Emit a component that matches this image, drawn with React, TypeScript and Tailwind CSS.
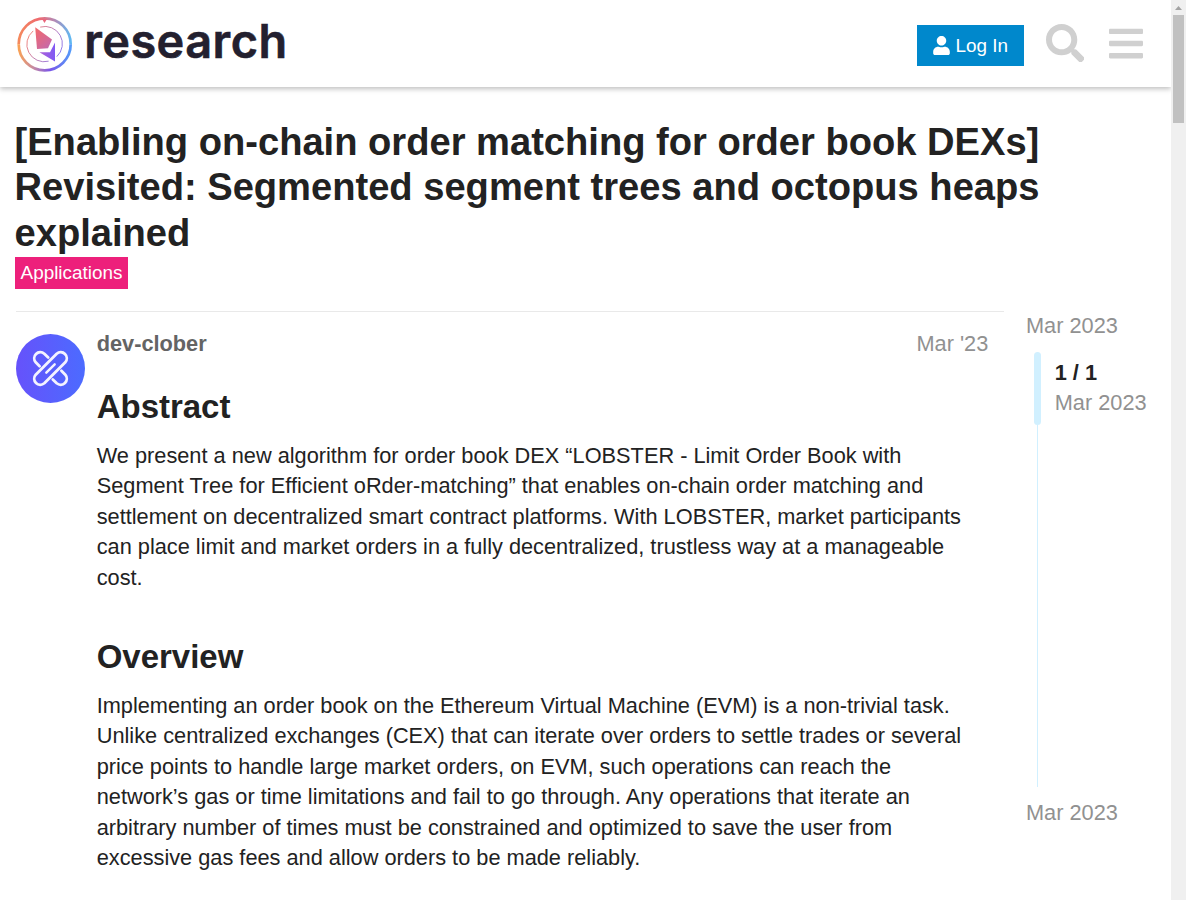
import React from "react";
import { FaUser, FaSearch, FaBars } from "react-icons/fa";

function RingLogo() {
  return (
    <svg viewBox="0 0 70 70" className="mt-px h-[70px] w-[70px] shrink-0" fill="none">
      <defs>
        <linearGradient id="top" x1="8" y1="30" x2="61" y2="30" gradientUnits="userSpaceOnUse">
          <stop offset="0" stopColor="#f58a5c" />
          <stop offset="0.4" stopColor="#ee6a70" />
          <stop offset="0.7" stopColor="#b08bb8" />
          <stop offset="1" stopColor="#5fb8f2" />
        </linearGradient>
        <linearGradient id="bottom" x1="8" y1="40" x2="61" y2="40" gradientUnits="userSpaceOnUse">
          <stop offset="0" stopColor="#fba253" />
          <stop offset="0.3" stopColor="#c48aa5" />
          <stop offset="0.6" stopColor="#7a55e8" />
          <stop offset="1" stopColor="#549bfa" />
        </linearGradient>
        <linearGradient id="inner" x1="17" y1="25" x2="52" y2="45" gradientUnits="userSpaceOnUse">
          <stop offset="0" stopColor="#f3786a" />
          <stop offset="1" stopColor="#7c6cf2" />
        </linearGradient>
        <linearGradient id="gem" x1="25" y1="20" x2="49" y2="46" gradientUnits="userSpaceOnUse">
          <stop offset="0" stopColor="#f1696d" />
          <stop offset="0.5" stopColor="#d0699c" />
          <stop offset="1" stopColor="#9b6cd5" />
        </linearGradient>
        <linearGradient id="shard" x1="30" y1="45" x2="48" y2="45" gradientUnits="userSpaceOnUse">
          <stop offset="0" stopColor="#ad61d8" />
          <stop offset="1" stopColor="#7758fa" />
        </linearGradient>
      </defs>
      <path d="M8.7 34.3a26 26 0 0 1 52 0" stroke="url(#top)" strokeWidth="2.7" />
      <path d="M8.7 34.3a26 26 0 0 0 52 0" stroke="url(#bottom)" strokeWidth="2.7" />
      <path d="M32 9h5l-2.5 4z" fill="#ea667c" />
      <path d="M30.2 17.1A17.4 17.4 0 0 1 46.8 46.6" stroke="url(#inner)" strokeWidth="0.9" />
      <path d="M23.2 20.9A17.4 17.4 0 0 0 38.6 51.2" stroke="url(#inner)" strokeWidth="0.9" />
      <path d="M25.2 17.2L42 29.5L38 38.3L27 39z" fill="url(#gem)" />
      <path d="M45 32.5V51.5L29.4 42.2L40 42.3z" fill="url(#shard)" />
    </svg>
  );
}

function CloverAvatar() {
  return (
    <svg viewBox="0 0 69 69" className="h-[69px] w-[69px] shrink-0" fill="none">
      <defs>
        <linearGradient id="disc" x1="0" y1="0" x2="69" y2="0" gradientUnits="userSpaceOnUse">
          <stop offset="0" stopColor="#6652fb" />
          <stop offset="1" stopColor="#4c6bff" />
        </linearGradient>
      </defs>
      <circle cx="34.5" cy="34.5" r="34.5" fill="url(#disc)" />
      <g stroke="#f4f3ff" strokeWidth="2.8" strokeLinecap="round" strokeLinejoin="round">
        <path d="M40.7 19.7L19.7 40.7A6.1 6.1 0 0 0 28.3 49.3L49.3 28.3A6.1 6.1 0 0 0 40.7 19.7Z" />
        <path d="M32.2 23.6L28.3 19.7A6.1 6.1 0 0 0 19.7 28.3L23.6 32.2" />
        <path d="M36.8 45.4L40.7 49.3A6.1 6.1 0 0 0 49.3 40.7L45.4 36.8" />
        <path d="M30.3 38.7L38.7 30.3" strokeWidth="2.4" />
      </g>
    </svg>
  );
}

function Header() {
  return (
    <header className="flex h-[87px] shrink-0 items-start bg-white shadow-[0_2px_5px_0_rgba(0,0,0,0.25)]">
      <div className="flex pl-2.5 pt-[9px]">
        <RingLogo />
        <span className="pl-[4.2px] font-[Inter] text-[46.8px] font-semibold leading-[65px] tracking-[0.5px] text-[#23202f] [-webkit-text-stroke:0.6px_#23202f]">
          research
        </span>
      </div>
      <div className="ml-auto flex items-start pr-7">
        <button className="mt-[25px] flex h-[41px] w-[107px] items-center bg-[#0088cc] pl-4 text-[18.9px] text-white">
          <FaUser className="mr-[5.5px] h-[19px] w-[17px]" />
          <span className="pt-px">Log In</span>
        </button>
        <FaSearch className="ml-[21.7px] mt-[23.7px] h-[38.5px] w-[38.5px] text-[#d0d0d0]" />
        <FaBars className="ml-[24.8px] mt-[23.7px] h-[39px] w-[34px] text-[#d0d0d0]" />
      </div>
    </header>
  );
}

function Post() {
  return (
    <article className="flex h-[589px] w-[988px] border-t border-[#e9e9e9] pt-[22px]">
      <CloverAvatar />
      <div className="ml-[11.7px] flex-1">
        <div className="-mt-[5px] flex justify-between pr-[15.7px] leading-[30.47px]">
          <span className="font-bold text-[#646464]">dev-clober</span>
          <span className="text-[#919191]">Mar '23</span>
        </div>
        <h2 className="mt-[27.7px] text-[32.97px] font-bold leading-[40px]">Abstract</h2>
        <p className="mt-[13.5px] whitespace-nowrap">
          We present a new algorithm for order book DEX “LOBSTER - Limit Order Book with<br />
          Segment Tree for Efficient oRder-matching” that enables on-chain order matching and<br />
          settlement on decentralized smart contract platforms. With LOBSTER, market participants<br />
          can place limit and market orders in a fully decentralized, trustless way at a manageable<br />
          cost.
        </p>
        <h2 className="mt-[44px] text-[32.97px] font-bold leading-[40px]">Overview</h2>
        <p className="mt-[13.75px] whitespace-nowrap">
          Implementing an order book on the Ethereum Virtual Machine (EVM) is a non-trivial task.<br />
          Unlike centralized exchanges (CEX) that can iterate over orders to settle trades or several<br />
          price points to handle large market orders, on EVM, such operations can reach the<br />
          network’s gas or time limitations and fail to go through. Any operations that iterate an<br />
          arbitrary number of times must be constrained and optimized to save the user from<br />
          excessive gas fees and allow orders to be made reliably.
        </p>
      </div>
    </article>
  );
}

function Timeline() {
  return (
    <aside className="ml-[22px] flex flex-col text-[#919191]">
      <span className="h-[30px]">Mar 2023</span>
      <div className="ml-2 mt-[11px] flex h-[435px]">
        <div className="flex w-[7px] flex-col items-center">
          <div className="h-[73px] w-[7px] shrink-0 rounded-[3.5px] bg-[#d1f0ff]" />
          <div className="w-px flex-1 bg-[#d1f0ff]" />
        </div>
        <div className="ml-[13.7px] flex flex-col pt-[6.3px]">
          <span className="h-[30px] font-bold text-[#222222]">1 / 1</span>
          <span>Mar 2023</span>
        </div>
      </div>
      <span className="mt-[11px]">Mar 2023</span>
    </aside>
  );
}

function Scrollbar() {
  return (
    <div className="flex w-[15px] shrink-0 flex-col items-center bg-[#f0f0f0]">
      <svg viewBox="0 0 15 15" className="h-[15px] w-[15px] shrink-0">
        <path d="M4 10L7.5 6L11 10z" fill="#a3a3a3" />
      </svg>
      <div className="h-[108px] w-[11px] bg-[#c1c1c1]" />
    </div>
  );
}

export default function App() {
  return (
    <div className="flex h-[900px] w-[1186px] overflow-hidden bg-white font-['Liberation_Sans',Arial,sans-serif] text-[21.755px] leading-[30.47px] text-[#222222]">
      <div className="flex w-[1171px] shrink-0 flex-col overflow-hidden">
        <Header />
        <h1 className="ml-[14.5px] mt-[31.8px] h-[138.2px] whitespace-nowrap text-[38.12px] font-bold leading-[45.47px]">
          [Enabling on-chain order matching for order book DEXs]<br />
          Revisited: Segmented segment trees and octopus heaps<br />
          explained
        </h1>
        <div className="ml-[15px] flex h-8 w-[113px] shrink-0 items-center justify-center bg-[#ed207b] text-[18.9px] text-white">
          Applications
        </div>
        <div className="ml-4 mt-[22px] flex">
          <Post />
          <Timeline />
        </div>
      </div>
      <Scrollbar />
    </div>
  );
}
